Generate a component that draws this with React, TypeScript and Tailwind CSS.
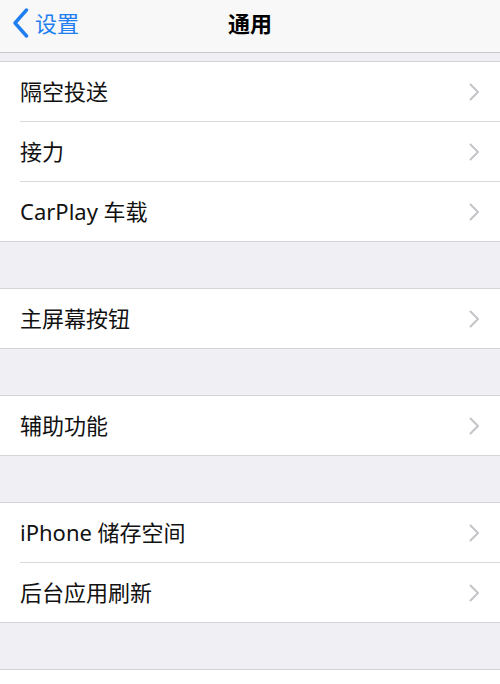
import React from "react";

const font = {
  fontFamily:
    '"Noto Sans", "Noto Sans CJK SC", "Liberation Sans", sans-serif',
};

type Group = string[];

const groups: Group[] = [
  ["隔空投送", "接力", "CarPlay 车载"],
  ["主屏幕按钮"],
  ["辅助功能"],
  ["iPhone 储存空间", "后台应用刷新"],
  ["日期与时间"],
];

function Chevron() {
  return (
    <svg width="11" height="18" viewBox="0 0 11 18" fill="none">
      <path
        d="M1.5 1.5 L9 9 L1.5 16.5"
        stroke="#c4c4c9"
        strokeWidth="2"
        strokeLinecap="round"
        strokeLinejoin="round"
      />
    </svg>
  );
}

function Row({ label, last }: { label: string; last: boolean }) {
  return (
    <div className={`flex items-stretch bg-white pl-5 ${last ? "h-[59px]" : "h-[60px]"}`}>
      <div
        className={`flex flex-1 items-center pr-5 ${
          last ? "" : "border-b border-[#d9d9dd]"
        }`}
      >
        <span className="flex-1 pb-[2px] text-[22px] leading-none text-[#111]">{label}</span>
        <Chevron />
      </div>
    </div>
  );
}

export default function App() {
  return (
    <div
      className="h-[684px] w-[500px] overflow-hidden bg-[#efeff4]"
      style={font}
    >
      {/* navigation bar */}
      <div className="relative flex h-[53px] items-center border-b border-[#c8c8cc] bg-[#f8f8f8] pb-[6px]">
        <div className="flex items-center pl-3">
          <svg width="17" height="30" viewBox="0 0 17 30" fill="none">
            <path
              d="M14.5 2 L3 15 L14.5 28"
              stroke="#1f7ef0"
              strokeWidth="3.4"
              strokeLinecap="round"
              strokeLinejoin="round"
            />
          </svg>
          <span className="ml-[6px] text-[22px] leading-none text-[#1f7ef0]">设置</span>
        </div>
        <div className="pointer-events-none absolute inset-x-0 top-0 flex h-full items-center justify-center pb-[6px]">
          <span className="text-[22px] font-semibold leading-none text-black">通用</span>
        </div>
      </div>

      <div className="flex flex-col gap-[46px] pt-[8px]">
        {groups.map((g, gi) => (
          <div key={gi} className="border-y border-[#d4d4d8]">
            {g.map((label, i) => (
              <Row key={label} label={label} last={i === g.length - 1} />
            ))}
          </div>
        ))}
      </div>
    </div>
  );
}
